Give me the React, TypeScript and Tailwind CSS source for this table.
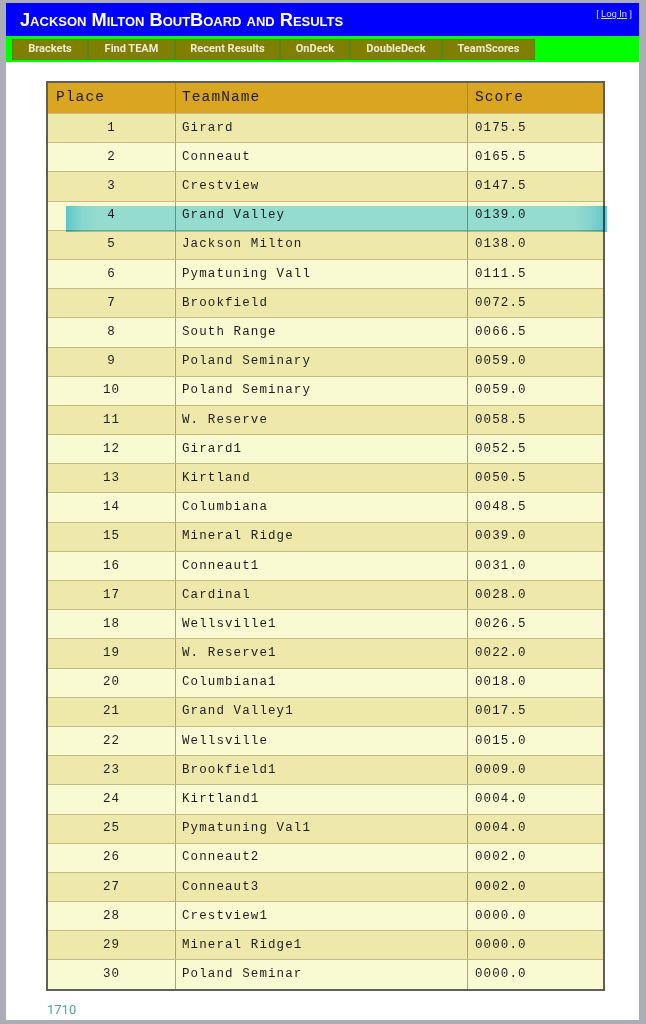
import React from "react";

const rows: [number, string, string][] = [
  [1, "Girard", "0175.5"],
  [2, "Conneaut", "0165.5"],
  [3, "Crestview", "0147.5"],
  [4, "Grand Valley", "0139.0"],
  [5, "Jackson Milton", "0138.0"],
  [6, "Pymatuning Vall", "0111.5"],
  [7, "Brookfield", "0072.5"],
  [8, "South Range", "0066.5"],
  [9, "Poland Seminary", "0059.0"],
  [10, "Poland Seminary", "0059.0"],
  [11, "W. Reserve", "0058.5"],
  [12, "Girard1", "0052.5"],
  [13, "Kirtland", "0050.5"],
  [14, "Columbiana", "0048.5"],
  [15, "Mineral Ridge", "0039.0"],
  [16, "Conneaut1", "0031.0"],
  [17, "Cardinal", "0028.0"],
  [18, "Wellsville1", "0026.5"],
  [19, "W. Reserve1", "0022.0"],
  [20, "Columbiana1", "0018.0"],
  [21, "Grand Valley1", "0017.5"],
  [22, "Wellsville", "0015.0"],
  [23, "Brookfield1", "0009.0"],
  [24, "Kirtland1", "0004.0"],
  [25, "Pymatuning Val1", "0004.0"],
  [26, "Conneaut2", "0002.0"],
  [27, "Conneaut3", "0002.0"],
  [28, "Crestview1", "0000.0"],
  [29, "Mineral Ridge1", "0000.0"],
  [30, "Poland Seminar", "0000.0"],
];

const navItems = [
  { label: "Brackets", w: "w-[76px]" },
  { label: "Find TEAM", w: "w-[87px]" },
  { label: "Recent Results", w: "w-[105px]" },
  { label: "OnDeck", w: "w-[70px]" },
  { label: "DoubleDeck", w: "w-[92px]" },
  { label: "TeamScores", w: "w-[93px]" },
];

export default function App() {
  return (
    <div className="min-h-[1024px] w-[646px] bg-[#adadb5] pt-[3px] pl-[6px]">
      <div className="flex h-[1017px] w-[633px] flex-col bg-white">
        {/* Header */}
        <div className="flex h-[33px] items-start justify-between bg-[#0000ff] pl-[14px] pr-[7px]">
          <div
            className="mt-[7px] text-[18.2px] font-bold leading-[20px] text-white [font-variant:small-caps]"
            style={{ fontFamily: '"Liberation Sans", Arial, sans-serif' }}
          >
            Jackson Milton BoutBoard and Results
          </div>
          <div
            className="mt-[5px] text-[9.5px] leading-[12px] text-[#d8dcff]"
            style={{ fontFamily: 'Roboto, "Liberation Sans", sans-serif' }}
          >
            [ <span className="underline">Log In</span> ]
          </div>
        </div>
        {/* Nav */}
        <div className="flex h-[26px] bg-[#00ff00] pl-[6px] pt-[3px]">
          {navItems.map((n) => (
            <div
              key={n.label}
              className={`${n.w} flex h-[21px] items-center justify-center border border-[#4e8a1c] bg-[#808000] text-[11px] font-bold text-[#ecebd6]`}
              style={{ fontFamily: 'Roboto, "Liberation Sans", sans-serif' }}
            >
              {n.label}
            </div>
          ))}
        </div>
        {/* Body */}
        <div className="relative ml-[40px] mt-[19px] w-[559px]">
          <div
            className="border-2 border-[#5e5e5e] text-[#1e1e1e]"
            style={{ fontFamily: '"Liberation Mono", "Courier New", monospace' }}
          >
            <div className="grid h-[30px] grid-cols-[128px_292px_1fr] bg-[#daa520] text-[14.5px] tracking-[1.1px]">
              <div className="flex items-center border-r border-[#a7882e] pl-[8px]">Place</div>
              <div className="flex items-center border-r border-[#a7882e] pl-[6px]">TeamName</div>
              <div className="flex items-center pl-[7px]">Score</div>
            </div>
            {rows.map(([p, name, score], i) => (
              <div
                key={p}
                className={`grid h-[29.2px] grid-cols-[128px_292px_1fr] border-t border-[#c7bb85] text-[12.5px] tracking-[1.1px] ${
                  i % 2 === 0 ? "bg-[#eee8aa]" : "bg-[#fafad2]"
                }`}
              >
                <div className="flex items-center justify-center border-r border-[#aaa383]">{p}</div>
                <div className="flex items-center border-r border-[#aaa383] pl-[6px]">{name}</div>
                <div className="flex items-center pl-[7px]">{score}</div>
              </div>
            ))}
          </div>
          {/* highlighter stroke */}
          <div
            className="pointer-events-none absolute left-[20px] top-[125px] h-[26px] w-[541px] mix-blend-multiply"
            style={{
              background:
                "linear-gradient(to right, #5ec9f3 0%, #8cdcfb 3%, #96e1fc 6%, #96e1fc 94%, #86d8fa 97%, #5ec9f3 100%)",
            }}
          />
          <div
            className="mt-[9px] pl-[1px] text-[13px] text-[#4ea88f]"
            style={{ fontFamily: 'Roboto, "Liberation Sans", sans-serif' }}
          >
            1710
          </div>
        </div>
      </div>
    </div>
  );
}
